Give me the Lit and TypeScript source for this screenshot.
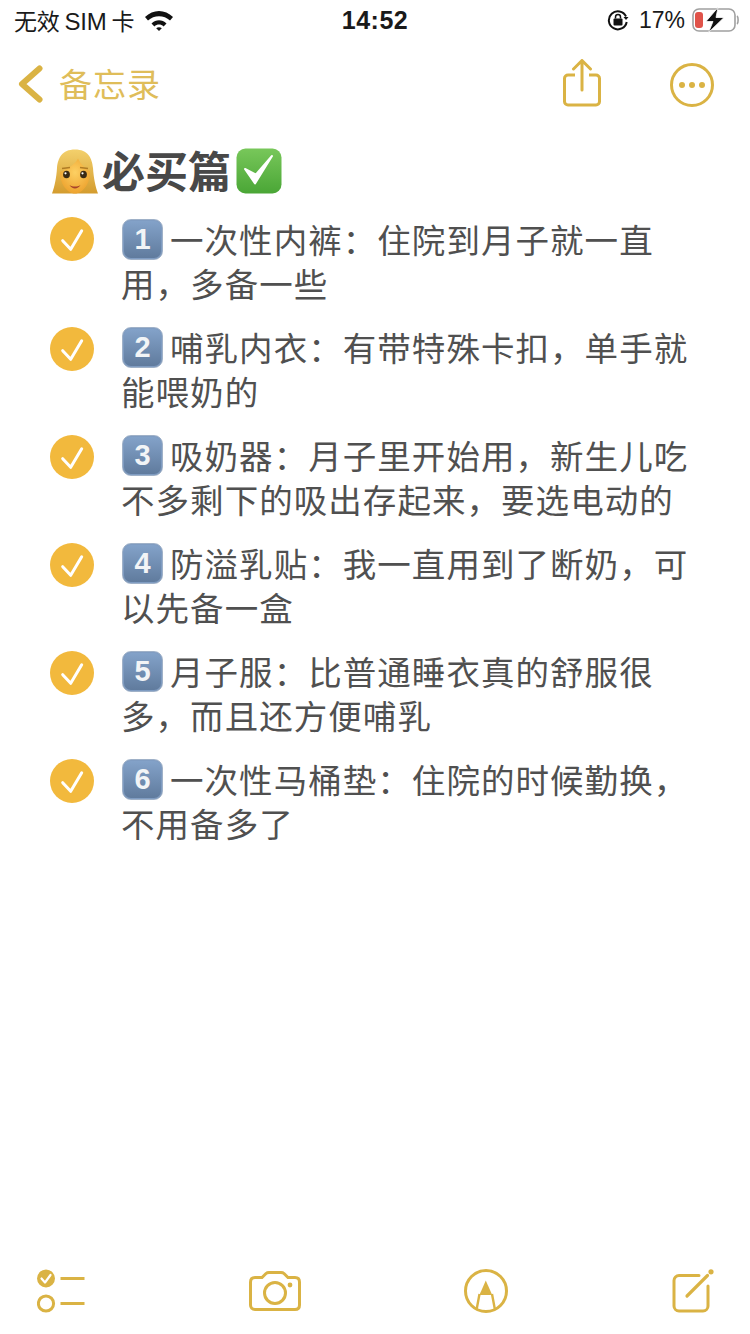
import { LitElement, html, css, svg } from 'lit';
import { customElement } from 'lit/decorators.js';

const items = [
  { n: '1', lines: ['一次性内裤：住院到月子就一直', '用，多备一些'] },
  { n: '2', lines: ['哺乳内衣：有带特殊卡扣，单手就', '能喂奶的'] },
  { n: '3', lines: ['吸奶器：月子里开始用，新生儿吃', '不多剩下的吸出存起来，要选电动的'] },
  { n: '4', lines: ['防溢乳贴：我一直用到了断奶，可', '以先备一盒'] },
  { n: '5', lines: ['月子服：比普通睡衣真的舒服很', '多，而且还方便哺乳'] },
  { n: '6', lines: ['一次性马桶垫：住院的时候勤换，', '不用备多了'] },
];

const GOLD = '#dab344';

const womanEmoji = svg`
  <svg class="woman" width="46" height="45" viewBox="0 0 46 45">
    <defs>
      <linearGradient id="hair" x1="0" y1="0" x2="0" y2="1">
        <stop offset="0" stop-color="#f3d06c" />
        <stop offset="1" stop-color="#d49c2e" />
      </linearGradient>
      <radialGradient id="skin" cx="0.5" cy="0.4" r="0.65">
        <stop offset="0" stop-color="#fdd063" />
        <stop offset="1" stop-color="#ec9f2a" />
      </radialGradient>
    </defs>
    <path d="M23 0.5C10 0.5 6 9 5 19C4.4 29 2.5 38 0 44.5H46C43.5 38 41.6 29 41 19C40 9 36 0.5 23 0.5Z" fill="url(#hair)" />
    <path d="M8 23C14 20.5 23 16 26 9.5C29 16 34 20 38 22.5C38.5 34 31 44.5 23 44.5C15 44.5 7.5 34 8 23Z" fill="url(#skin)" />
    <ellipse cx="14.5" cy="25.5" rx="3.4" ry="3.8" fill="#3a2a14" />
    <ellipse cx="31.5" cy="25.5" rx="3.4" ry="3.8" fill="#3a2a14" />
    <circle cx="13.5" cy="24.3" r="1.1" fill="#fff" />
    <circle cx="30.5" cy="24.3" r="1.1" fill="#fff" />
    <path d="M17.5 36C20.5 38 25.5 38 28.5 36C26 40.5 20 40.5 17.5 36Z" fill="#a8432a" />
    <path d="M10 19.5L18 18.5M28 18.5L36 19.5" stroke="#b07c25" stroke-width="1.3" fill="none" />
  </svg>
`;

const greenCheck = svg`
  <svg class="green" width="46" height="46" viewBox="0 0 46 46">
    <defs>
      <linearGradient id="green" x1="0" y1="0" x2="0" y2="1">
        <stop offset="0" stop-color="#78c75a" />
        <stop offset="1" stop-color="#4aa636" />
      </linearGradient>
    </defs>
    <rect x="0.5" y="0.5" width="45" height="45" rx="9" fill="url(#green)" />
    <path d="M9 21L19 35.5L36 8L20 26.5Z" fill="#fff" stroke="#fff" stroke-width="2" stroke-linejoin="round" />
  </svg>
`;

const rowCheck = svg`
  <svg class="tick" width="44" height="44" viewBox="0 0 44 44">
    <circle cx="22" cy="22" r="22" fill="#f2b93d" />
    <path d="M12.7 23.7L20.7 32.3L31.7 13.7" stroke="#fff" stroke-width="3" stroke-linecap="round" stroke-linejoin="round" fill="none" />
  </svg>
`;

@customElement('app-root')
export class AppRoot extends LitElement {
  static styles = css`
    :host {
      display: flex;
      flex-direction: column;
      width: 750px;
      height: 1334px;
      background: #fff;
      font-family: 'Noto Sans CJK SC', 'Liberation Sans', sans-serif;
      overflow: hidden;
    }
    svg {
      display: block;
      flex: none;
    }
    .status {
      display: flex;
      align-items: center;
      justify-content: space-between;
      height: 40px;
      padding: 0 11px 0 14px;
      position: relative;
      color: #1a1a1a;
      font-size: 23px;
    }
    .status-left,
    .status-right {
      display: flex;
      align-items: center;
    }
    .carrier {
      font-size: 23px;
      letter-spacing: -0.2px;
      margin-right: 10px;
      white-space: pre;
    }
    .carrier b {
      font-family: 'Liberation Sans', sans-serif;
      font-weight: 400;
      font-size: 24px;
    }
    .time {
      position: absolute;
      left: 0;
      right: 0;
      text-align: center;
      font-family: 'Liberation Sans', sans-serif;
      font-weight: 700;
      font-size: 25px;
      letter-spacing: 0.5px;
    }
    .pct {
      font-family: 'Liberation Sans', sans-serif;
      font-size: 23px;
      margin: 0 7px 0 10px;
    }
    .nav {
      display: flex;
      align-items: center;
      height: 90px;
      padding: 0 36px 0 17px;
      color: #dfbd5a;
    }
    .chevron {
      margin-top: -2px;
    }
    .back-label {
      font-size: 33px;
      letter-spacing: 1px;
      line-height: 46px;
      margin: -4px 0 0 15px;
    }
    .nav-actions {
      display: flex;
      align-items: center;
      gap: 69px;
      margin-left: auto;
    }
    .share {
      margin-top: -4px;
    }
    .note {
      flex: 1;
      padding: 18px 60px 0 50px;
      color: #505050;
    }
    .title {
      display: flex;
      align-items: center;
      height: 46px;
      margin-bottom: 25px;
      font-size: 43px;
      font-weight: 700;
      line-height: 46px;
      color: #484848;
    }
    .title span {
      margin: -4px 5px 0 4px;
    }
    .woman {
      margin-left: 2px;
    }
    .list {
      display: flex;
      flex-direction: column;
      gap: 18px;
      list-style: none;
      margin: 0;
      padding: 0;
    }
    .row {
      display: flex;
      gap: 27px;
    }
    .row:first-child .tick {
      margin-top: -2px;
    }
    .lines {
      margin: -3px 0 3px;
      font-size: 33.5px;
      letter-spacing: 1.05px;
      line-height: 45px;
      white-space: nowrap;
    }
    .line {
      display: flex;
      align-items: center;
      height: 45px;
    }
    .line + .line {
      margin: -1px 0 1px;
    }
    .key {
      display: flex;
      align-items: center;
      justify-content: center;
      flex: none;
      width: 41px;
      height: 41px;
      margin: 2px 7px 0 1px;
      border-radius: 9px;
      box-sizing: border-box;
      border: 1px solid #9fb1c8;
      box-shadow: inset 0 0 0 1px #7f9cc2;
      background: linear-gradient(#84a3ca, #5f7a9c);
      color: #f2f4f6;
      font-family: 'Liberation Sans', sans-serif;
      font-weight: 700;
      font-size: 29px;
      letter-spacing: 0;
    }
    .toolbar {
      display: flex;
      align-items: center;
      justify-content: space-between;
      height: 84px;
      padding: 0 36px 3px 37px;
      box-sizing: border-box;
    }
  `;

  render() {
    return html`
      <div class="status">
        <div class="status-left">
          <span class="carrier">无效 <b>SIM</b> 卡</span>
          <svg width="30" height="22" viewBox="0 0 30 22">
            <path d="M1 8C9 0 21 0 29 8L26 11.5C20 5.8 10 5.8 4 11.5Z" fill="#111" />
            <path d="M7.5 14.5C12 10.2 18 10.2 22.5 14.5L19.6 17.4C16.8 15 13.2 15 10.4 17.4Z" fill="#111" />
            <path d="M12.2 19.2C13.8 17.8 16.2 17.8 17.8 19.2L15 22Z" fill="#111" />
          </svg>
        </div>
        <div class="time">14:52</div>
        <div class="status-right">
          <svg width="22" height="22" viewBox="0 0 22 22">
            <path d="M19 7.5A9 9 0 1 0 19.7 13" stroke="#111" stroke-width="2" fill="none" />
            <path d="M16.5 8H21.5L19 11Z" fill="#111" />
            <rect x="6.5" y="9.5" width="9" height="7" rx="1" fill="#111" />
            <path d="M8.5 9.5V8A2.5 2.5 0 0 1 13.5 8V9.5" stroke="#111" stroke-width="1.5" fill="none" />
          </svg>
          <span class="pct">17%</span>
          <svg width="47" height="26" viewBox="0 0 47 26">
            <rect x="1" y="2" width="42" height="22" rx="6" fill="none" stroke="#a0a0a0" stroke-width="1.6" />
            <rect x="3" y="5" width="8" height="16" rx="3" fill="#e0534a" />
            <path d="M45 9C46.5 10 46.5 16 45 17" stroke="#a0a0a0" stroke-width="1.6" fill="none" />
            <path d="M26 0.5L14 14.5H21L16.5 25.5L32 10.5H24Z" fill="#111" stroke="#fff" stroke-width="0.8" />
          </svg>
        </div>
      </div>

      <div class="nav">
        <svg class="chevron" width="27" height="38" viewBox="0 0 27 38">
          <path d="M22.5 3.5L5 19L22.5 34.5" stroke="${GOLD}" stroke-width="6" stroke-linecap="round" stroke-linejoin="round" fill="none" />
        </svg>
        <span class="back-label">备忘录</span>
        <div class="nav-actions">
          <svg class="share" width="38" height="48" viewBox="0 0 38 48">
            <path d="M12 16H5A3.5 3.5 0 0 0 1.5 19.5V42.5A3.5 3.5 0 0 0 5 46H33A3.5 3.5 0 0 0 36.5 42.5V19.5A3.5 3.5 0 0 0 33 16H26" stroke="${GOLD}" stroke-width="3" fill="none" />
            <path d="M19 31V2M10.5 10L19 1.5L27.5 10" stroke="${GOLD}" stroke-width="3" stroke-linecap="round" stroke-linejoin="round" fill="none" />
          </svg>
          <svg width="44" height="44" viewBox="0 0 44 44">
            <circle cx="22" cy="22" r="20.5" stroke="${GOLD}" stroke-width="3" fill="none" />
            <circle cx="12" cy="22" r="3" fill="${GOLD}" />
            <circle cx="22" cy="22" r="3" fill="${GOLD}" />
            <circle cx="32" cy="22" r="3" fill="${GOLD}" />
          </svg>
        </div>
      </div>

      <div class="note">
        <div class="title">${womanEmoji}<span>必买篇</span>${greenCheck}</div>
        <ul class="list">
          ${items.map(
            (item) => html`
              <li class="row">
                ${rowCheck}
                <div class="lines">
                  <div class="line"><span class="key">${item.n}</span>${item.lines[0]}</div>
                  <div class="line">${item.lines[1]}</div>
                </div>
              </li>
            `,
          )}
        </ul>
      </div>

      <div class="toolbar">
        <svg width="48" height="44" viewBox="0 0 48 44">
          <circle cx="9" cy="9.5" r="9" fill="${GOLD}" />
          <path d="M4.5 9.5L8 13.5L13.5 6" stroke="#fff" stroke-width="2.2" fill="none" stroke-linecap="round" stroke-linejoin="round" />
          <circle cx="9" cy="34.5" r="7.6" stroke="${GOLD}" stroke-width="3" fill="none" />
          <path d="M23.5 9.5H47.5M23.5 34.5H47.5" stroke="${GOLD}" stroke-width="3" />
        </svg>
        <svg width="52" height="40" viewBox="0 0 52 40">
          <path d="M6 6.5H13L17 2.5C18 1.6 18.8 1.5 20 1.5H32C33.2 1.5 34 1.6 35 2.5L39 6.5H46C48.8 6.5 50.5 8.4 50.5 11.2V34C50.5 36.8 48.8 38.5 46 38.5H6C3.2 38.5 1.5 36.8 1.5 34V11.2C1.5 8.4 3.2 6.5 6 6.5Z" stroke="${GOLD}" stroke-width="3" fill="none" />
          <circle cx="26" cy="22" r="10.5" stroke="${GOLD}" stroke-width="3" fill="none" />
          <circle cx="41" cy="14" r="2.4" fill="${GOLD}" />
        </svg>
        <svg width="44" height="44" viewBox="0 0 44 44">
          <circle cx="22" cy="22" r="20.5" stroke="${GOLD}" stroke-width="3" fill="none" />
          <path d="M21.8 11.5L28.2 26H15.4Z" fill="${GOLD}" />
          <path d="M15.5 25L12.5 41M28 25L31 41" stroke="${GOLD}" stroke-width="2.4" fill="none" />
        </svg>
        <svg width="42" height="44" viewBox="0 0 42 44">
          <path d="M27 6.5H7A5 5 0 0 0 2 11.5V37A5 5 0 0 0 7 42H31A5 5 0 0 0 36 37V17" stroke="${GOLD}" stroke-width="3" fill="none" stroke-linecap="round" />
          <path d="M15 27L35.5 6.5" stroke="${GOLD}" stroke-width="3.2" stroke-linecap="round" />
          <circle cx="39" cy="2.8" r="2.6" fill="${GOLD}" />
        </svg>
      </div>
    `;
  }
}
